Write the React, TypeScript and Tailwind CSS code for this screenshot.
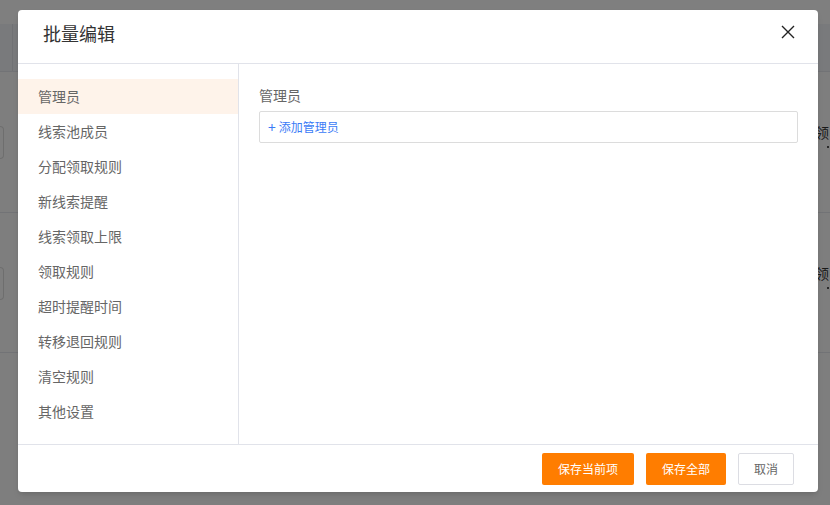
const menu = [
  "管理员",
  "线索池成员",
  "分配领取规则",
  "新线索提醒",
  "线索领取上限",
  "领取规则",
  "超时提醒时间",
  "转移退回规则",
  "清空规则",
  "其他设置",
];

function Backdrop() {
  return (
    <div className="absolute inset-0 bg-[#fdfdfd]">
      <div className="h-[24px] bg-white" />
      <div className="h-[48px] bg-[#f3f5f9] border-b border-[#e4e6ec] flex">
        <div className="w-[13px] border-r border-[#e0e2e8]" />
      </div>
      <div className="h-[141px] border-b border-[#e4e6ec] flex items-start justify-between pt-[54px]">
        <div className="w-[4px] h-[33px] border border-l-0 border-[#dcdcdc] rounded-r" />
        <div className="flex flex-col items-start w-[15px] mt-[-3px]">
          <span className="text-[14px] leading-[18px] text-[#333]">领</span>
          <span className="w-[2px] h-[2px] bg-[#555] ml-[12px] mt-[5px]" />
        </div>
      </div>
      <div className="h-[140px] border-b border-[#e4e6ec] flex items-start justify-between pt-[54px]">
        <div className="w-[4px] h-[33px] border border-l-0 border-[#dcdcdc] rounded-r" />
        <div className="flex flex-col items-start w-[15px] mt-[-3px]">
          <span className="text-[14px] leading-[18px] text-[#333]">领</span>
          <span className="w-[2px] h-[2px] bg-[#555] ml-[12px] mt-[5px]" />
        </div>
      </div>
    </div>
  );
}

export default function App() {
  const active = 0;
  return (
    <div
      className="relative w-[830px] h-[505px] overflow-hidden"
      style={{ fontFamily: '"Noto Sans CJK SC", "Noto Sans", sans-serif' }}
    >
      <Backdrop />
      <div className="absolute inset-0 bg-black/50" />

      <div className="absolute left-[18px] top-[10px] w-[800px] h-[482px] bg-white rounded-[4px] shadow-md flex flex-col">
        <div className="h-[54px] shrink-0 border-b border-[#e1e3ea] flex items-start justify-between pt-[10px] pl-[25px] pr-[23px]">
          <h2 className="text-[18px] text-[#333] leading-[26px]">批量编辑</h2>
          <svg width="14" height="14" viewBox="0 0 14 14" className="mt-[5px]">
            <path d="M1 1L13 13M13 1L1 13" stroke="#222" strokeWidth="1.4" fill="none" />
          </svg>
        </div>

        <div className="flex-1 flex min-h-0">
          <div className="w-[221px] shrink-0 border-r border-[#e1e3ea] pt-[15px]">
            {menu.map((m, i) => (
              <div
                key={m}
                className={`h-[35px] flex items-center pl-[20px] text-[14px] text-[#666] ${
                  i === active ? "bg-[#fef3ea]" : ""
                }`}
              >
                {m}
              </div>
            ))}
          </div>

          <div className="flex-1 px-[20px] pt-[21px]">
            <div className="text-[14px] text-[#666] leading-[20px] mb-[6px]">管理员</div>
            <div className="h-[32px] border border-[#dcdcdc] rounded-[2px] flex items-center pl-[8px] text-[12px] text-[#3b7bf6]">
              <span className="text-[14px] mr-[3px] leading-none">+</span>添加管理员
            </div>
          </div>
        </div>

        <div className="h-[48px] shrink-0 border-t border-[#e1e3ea] flex items-start justify-end gap-[12px] pt-[8px] pr-[24px]">
          <button className="w-[92px] h-[32px] bg-[#ff7d00] text-white text-[12px] rounded-[2px]">
            保存当前项
          </button>
          <button className="w-[80px] h-[32px] bg-[#ff7d00] text-white text-[12px] rounded-[2px]">
            保存全部
          </button>
          <button className="w-[56px] h-[32px] bg-white border border-[#dcdde3] text-[#666] text-[12px] rounded-[2px]">
            取消
          </button>
        </div>
      </div>
    </div>
  );
}
